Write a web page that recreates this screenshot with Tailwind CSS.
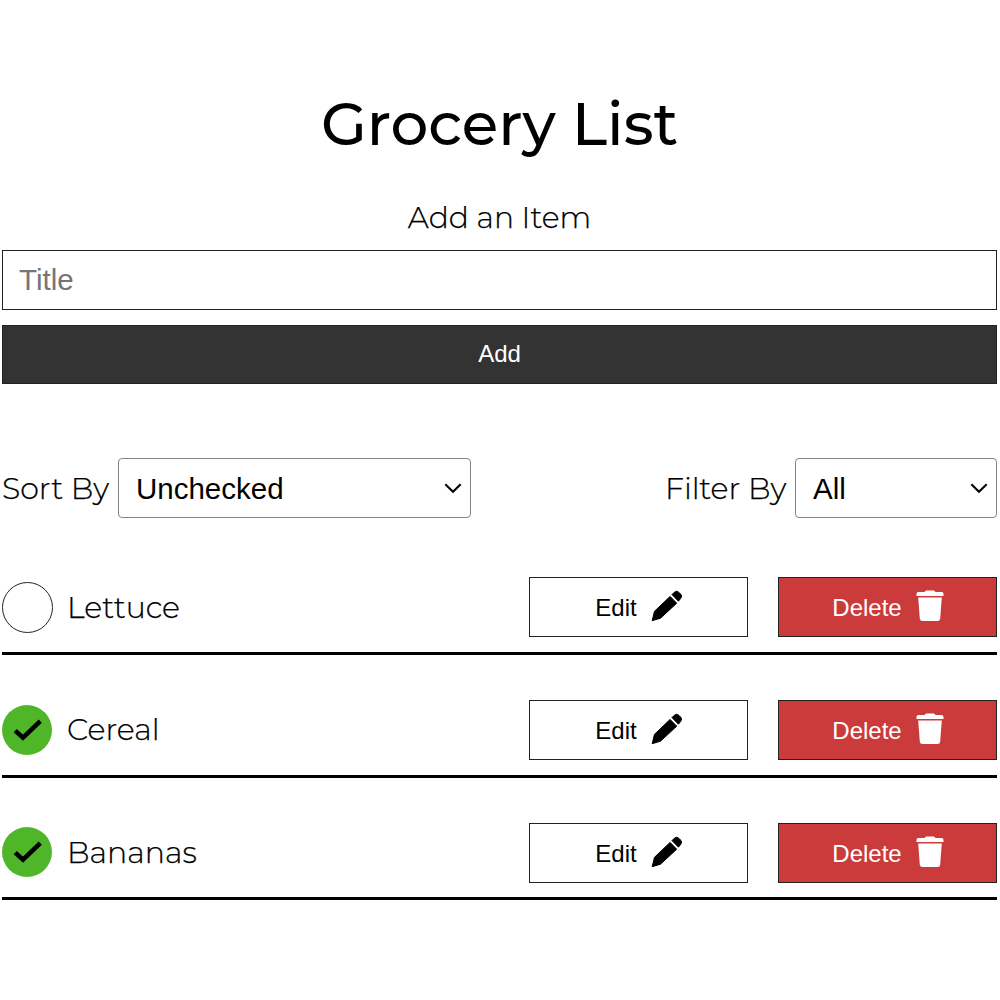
<!DOCTYPE html>
<html lang="en">
<head>
<meta charset="utf-8">
<title>Grocery List</title>
<script src="https://cdn.jsdelivr.net/npm/@tailwindcss/browser@4"></script>
</head>
<body class="bg-white text-black">
<svg class="hidden">
  <symbol id="pencil" viewBox="0 0 32 32"><path d="M1.2 30.7 3.5 21.3 19.1 6.4 25.7 13.2 9.5 28.2Z" stroke="currentColor" stroke-width="1" stroke-linejoin="round"/><path d="M21 4.6 23.3 2.3Q25.6.2 28 2.4L29.3 3.7Q31.8 6 29.7 8.4L27.4 11.2Z" stroke="currentColor" stroke-width="1" stroke-linejoin="round"/></symbol>
  <symbol id="trash" viewBox="0 0 28 32"><path d="M2.4 2H8.6Q9 .5 10.5.5H17.5Q19 .5 19.4 2H25.6Q27.5 2 27.5 4V6H.5V4Q.5 2 2.4 2Z"/><path d="M2.2 7.5H25.8L24.2 28.5Q24 31 21.5 31H6.5Q4 31 3.8 28.5Z"/></symbol>
  <symbol id="check" viewBox="0 0 50 50"><circle cx="25" cy="25" r="25" fill="#4fb62a"/><path d="M13.2 25.6 21 32.7 38.3 16.2" fill="none" stroke="#000" stroke-width="4.6"/></symbol>
  <symbol id="chevron" viewBox="0 0 18 12"><path d="M1.3 2.3 9 9.8 16.7 2.3" fill="none" stroke="#000" stroke-width="2.1"/></symbol>
</svg>
<main class="ml-0.5 flex w-[995px] flex-col pt-[84px] font-['Montserrat','Lato',sans-serif] text-[30px] leading-10 font-light">
  <h1 class="h-20 text-center text-[59.5px] leading-[79px] font-medium">Grocery List</h1>
  <div class="mt-[33px] h-10 text-center text-[29.8px] [-webkit-text-stroke:0.25px]">Add an Item</div>
  <div class="mt-[13px] flex h-[60px] items-center border border-[#222] px-4 font-['Liberation_Sans',sans-serif] text-[29.5px] font-normal text-[#757575]">Title</div>
  <button class="mt-[15px] h-[59px] border border-[#222] bg-[#333] pb-px font-['Liberation_Sans',sans-serif] text-[24px] font-normal text-white">Add</button>
  <section class="mt-[74px] flex h-[60px] items-center justify-between">
    <div class="flex items-center">
      <span class="w-[116px] pt-0.5 [-webkit-text-stroke:0.25px]">Sort By</span>
      <div class="flex h-[60px] w-[353px] items-center justify-between rounded border border-[#858585] pr-2 pl-[17px] font-['Liberation_Sans',sans-serif] text-[29.5px] font-normal"><span class="pt-0.5">Unchecked</span><svg class="h-3 w-[18px]"><use href="#chevron"/></svg></div>
    </div>
    <div class="flex items-center">
      <span class="w-[130px] pt-0.5 [-webkit-text-stroke:0.25px]">Filter By</span>
      <div class="flex h-[60px] w-[202px] items-center justify-between rounded border border-[#858585] pr-2 pl-[17px] font-['Liberation_Sans',sans-serif] text-[29.5px] font-normal"><span class="pt-0.5">All</span><svg class="h-3 w-[18px]"><use href="#chevron"/></svg></div>
    </div>
  </section>
  <ul class="mt-[59px] flex flex-col gap-[45px]">
    <li class="flex h-[78px] items-start border-b-3 border-black">
      <span class="mt-[5px] size-[51px] rounded-full border border-[#222]"></span>
      <span class="mt-[11px] ml-[14px] w-[462px] [-webkit-text-stroke:0.25px]">Lettuce</span>
      <button class="flex h-[60px] w-[219px] items-center justify-center border border-[#222] font-['Liberation_Sans',sans-serif] text-[24px] font-normal"><span class="mt-0.5 ml-px">Edit</span><svg class="mb-[3px] ml-[14px] size-8" fill="currentColor"><use href="#pencil"/></svg></button>
      <button class="ml-[30px] flex h-[60px] w-[219px] items-center justify-center border border-[#222] bg-[#cb3b3b] font-['Liberation_Sans',sans-serif] text-[24px] font-normal text-white"><span class="mt-0.5 ml-px">Delete</span><svg class="mb-[3px] ml-[14px] h-8 w-7" fill="currentColor"><use href="#trash"/></svg></button>
    </li>
    <li class="flex h-[78px] items-start border-b-3 border-black">
      <svg class="mt-[5px] size-[50px]"><use href="#check"/></svg>
      <span class="mt-[10px] ml-[15px] w-[462px] [-webkit-text-stroke:0.25px]">Cereal</span>
      <button class="flex h-[60px] w-[219px] items-center justify-center border border-[#222] font-['Liberation_Sans',sans-serif] text-[24px] font-normal"><span class="mt-0.5 ml-px">Edit</span><svg class="mb-[3px] ml-[14px] size-8" fill="currentColor"><use href="#pencil"/></svg></button>
      <button class="ml-[30px] flex h-[60px] w-[219px] items-center justify-center border border-[#222] bg-[#cb3b3b] font-['Liberation_Sans',sans-serif] text-[24px] font-normal text-white"><span class="mt-0.5 ml-px">Delete</span><svg class="mb-[3px] ml-[14px] h-8 w-7" fill="currentColor"><use href="#trash"/></svg></button>
    </li>
    <li class="flex h-[77px] items-start border-b-3 border-black">
      <svg class="mt-1 size-[50px]"><use href="#check"/></svg>
      <span class="mt-[10px] ml-[15px] w-[462px] [-webkit-text-stroke:0.25px]">Bananas</span>
      <button class="flex h-[60px] w-[219px] items-center justify-center border border-[#222] font-['Liberation_Sans',sans-serif] text-[24px] font-normal"><span class="mt-0.5 ml-px">Edit</span><svg class="mb-[3px] ml-[14px] size-8" fill="currentColor"><use href="#pencil"/></svg></button>
      <button class="ml-[30px] flex h-[60px] w-[219px] items-center justify-center border border-[#222] bg-[#cb3b3b] font-['Liberation_Sans',sans-serif] text-[24px] font-normal text-white"><span class="mt-0.5 ml-px">Delete</span><svg class="mb-[3px] ml-[14px] h-8 w-7" fill="currentColor"><use href="#trash"/></svg></button>
    </li>
  </ul>
</main>
</body>
</html>
